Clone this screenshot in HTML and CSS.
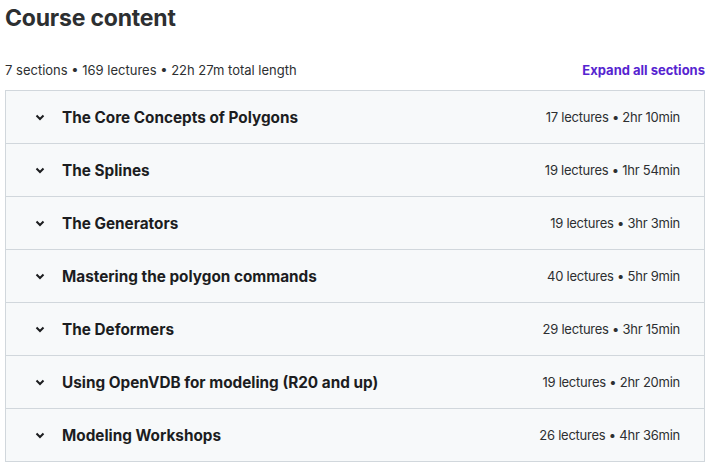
FILE: index.html
```html
<html>
  <head>
    <meta charset="utf-8">
    <title>Course content</title>
    <link rel="stylesheet" href="styles.css">
  </head>
  <body>
    <div id="conteudo">
      <h2 id="titulo">Course content</h2>
      <div id="resumo">
        <span>7 sections • 169 lectures • 22h 27m total length</span>
        <a id="expandir">Expand all sections</a>
      </div>
      <div id="secoes">
        <div class="secao">
          <svg class="seta" viewBox="0 0 16 16"><path d="M4.5 6.5 L8 10 L11.5 6.5"/></svg>
          <span class="secao-titulo">The Core Concepts of Polygons</span>
          <span class="secao-info">17 lectures • 2hr 10min</span>
        </div>
        <div class="secao">
          <svg class="seta" viewBox="0 0 16 16"><path d="M4.5 6.5 L8 10 L11.5 6.5"/></svg>
          <span class="secao-titulo">The Splines</span>
          <span class="secao-info">19 lectures • 1hr 54min</span>
        </div>
        <div class="secao">
          <svg class="seta" viewBox="0 0 16 16"><path d="M4.5 6.5 L8 10 L11.5 6.5"/></svg>
          <span class="secao-titulo">The Generators</span>
          <span class="secao-info">19 lectures • 3hr 3min</span>
        </div>
        <div class="secao">
          <svg class="seta" viewBox="0 0 16 16"><path d="M4.5 6.5 L8 10 L11.5 6.5"/></svg>
          <span class="secao-titulo">Mastering the polygon commands</span>
          <span class="secao-info">40 lectures • 5hr 9min</span>
        </div>
        <div class="secao">
          <svg class="seta" viewBox="0 0 16 16"><path d="M4.5 6.5 L8 10 L11.5 6.5"/></svg>
          <span class="secao-titulo">The Deformers</span>
          <span class="secao-info">29 lectures • 3hr 15min</span>
        </div>
        <div class="secao">
          <svg class="seta" viewBox="0 0 16 16"><path d="M4.5 6.5 L8 10 L11.5 6.5"/></svg>
          <span class="secao-titulo">Using OpenVDB for modeling (R20 and up)</span>
          <span class="secao-info">19 lectures • 2hr 20min</span>
        </div>
        <div class="secao">
          <svg class="seta" viewBox="0 0 16 16"><path d="M4.5 6.5 L8 10 L11.5 6.5"/></svg>
          <span class="secao-titulo">Modeling Workshops</span>
          <span class="secao-info">26 lectures • 4hr 36min</span>
        </div>
      </div>
    </div>
  </body>
</html>
```

FILE: styles.css
```css
* {
  font-family: Inter, "Noto Sans", Arial, sans-serif;
  box-sizing: border-box;
}
body {
  margin: 0;
  color: #2d2f31;
  background: #fff;
}

#conteudo {
  margin-left: 5px;
  width: 700px;
}

#titulo {
  font-size: 23px;
  font-weight: 700;
  margin: 0;
  padding-top: 4px;
  height: 55px;
  letter-spacing: -0.2px;
}

#resumo {
  display: flex;
  justify-content: space-between;
  align-items: center;
  font-size: 13px;
  height: 30px;
  margin-bottom: 5px;
}

#expandir {
  color: #5624d0;
  font-weight: 700;
  font-size: 13px;
  cursor: pointer;
}

#secoes {
  border: 1px solid #d1d7dc;
  border-bottom: none;
}

.secao {
  display: flex;
  align-items: center;
  height: 53px;
  padding: 0 24px 0 26px;
  background-color: #f7f9fa;
  border-bottom: 1px solid #d1d7dc;
}

.seta {
  width: 16px;
  height: 16px;
  margin-right: 14px;
  fill: none;
  stroke: #1c1d1f;
  stroke-width: 2;
}

.secao-titulo {
  flex-grow: 1;
  font-size: 15.3px;
  font-weight: 700;
  color: #1c1d1f;
}

.secao-info {
  font-size: 13px;
  letter-spacing: -0.25px;
}
```
